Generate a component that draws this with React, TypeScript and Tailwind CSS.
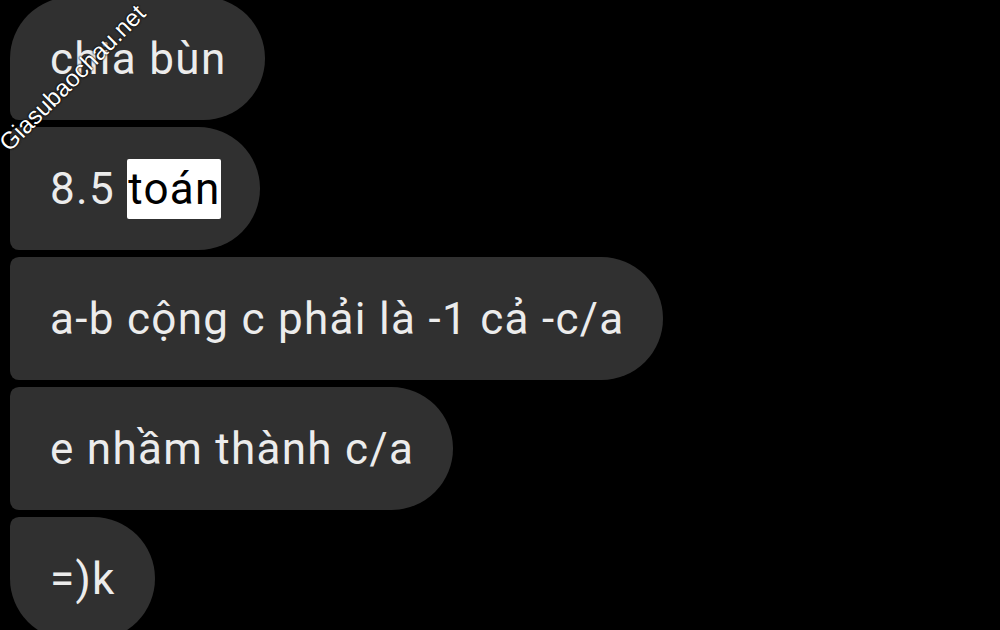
const MESSAGES = [
  'chia bùn',
  '8.5 toán',
  'a-b cộng c phải là -1 cả -c/a',
  'e nhầm thành c/a',
  '=)k',
]

function Bubble({ text, index, total }: { text: string; index: number; total: number }) {
  const first = index === 0
  const last = index === total - 1
  const corners = first
    ? 'rounded-tl-[62px] rounded-bl-[9px]'
    : last
      ? 'rounded-tl-[9px] rounded-bl-[62px]'
      : 'rounded-l-[9px]'

  // the highlighted word in the second message
  const content =
    text === '8.5 toán' ? (
      <>
        8.5{' '}
        <span className="bg-white text-black rounded-[2px] pl-[1px] pr-0 py-[4px]">toán</span>
      </>
    ) : (
      text
    )

  return (
    <div
      className={`h-[123px] shrink-0 flex items-center pl-10 pr-[39px] bg-[#303030] rounded-r-[62px] ${corners} self-start`}
    >
      <span className="text-[44px] leading-none tracking-[1.3px] text-[#ececec] whitespace-nowrap">{content}</span>
    </div>
  )
}

export default function App() {
  return (
    <div
      className="relative w-[1000px] h-[630px] bg-black overflow-hidden"
      style={{ fontFamily: 'Roboto, "Noto Sans", sans-serif' }}
    >
      <div className="flex flex-col gap-[7px] pl-[10px] -mt-[3px]">
        {MESSAGES.map((m, i) => (
          <Bubble key={i} text={m} index={i} total={MESSAGES.length} />
        ))}
      </div>

      {/* watermark */}
      <div
        className="absolute left-[-25px] top-[60px] -rotate-45 text-[24px] text-white whitespace-nowrap"
        style={{ fontFamily: '"Liberation Sans", Arial, sans-serif', textShadow: '0 0 2px #000, 0 0 2px #000' }}
      >
        Giasubaochau.net
      </div>
    </div>
  )
}
